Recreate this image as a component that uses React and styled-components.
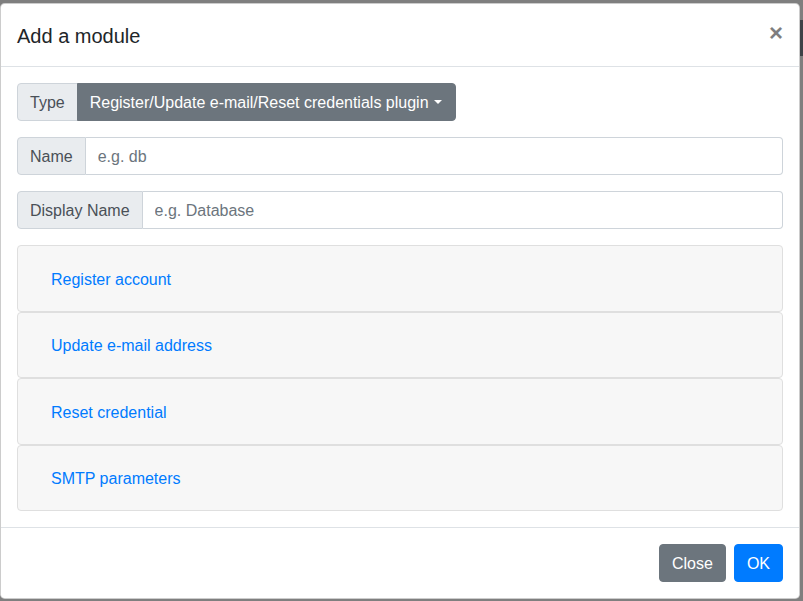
import React from "react";
import styled, { createGlobalStyle } from "styled-components";

const GlobalStyle = createGlobalStyle`
  * { box-sizing: border-box; }
  body {
    margin: 0;
    background: #7f7f7f;
    background-image: linear-gradient(#3d4247, #3d4247);
    background-size: 4px 36px;
    background-position: right 0 top 20px;
    background-repeat: no-repeat;
    font-family: "Liberation Sans", Arial, sans-serif;
    font-size: 16px;
    line-height: 1.5;
    color: #212529;
  }
`;

const Backdrop = styled.div`
  padding-top: 3px;
  min-height: 601px;
`;

const Modal = styled.div`
  width: 800px;
  background: #fff;
  border: 1px solid rgba(0, 0, 0, 0.2);
  border-radius: 4.8px;
  display: flex;
  flex-direction: column;
`;

const Header = styled.div`
  display: flex;
  align-items: flex-start;
  justify-content: space-between;
  padding: 17px 16px 15px;
  border-bottom: 1px solid #dee2e6;
`;

const Title = styled.h5`
  margin: 0;
  font-size: 20px;
  font-weight: 500;
  line-height: 1.5;
`;

const CloseX = styled.button`
  border: 0;
  background: transparent;
  padding: 16px;
  margin: -16px -16px -16px auto;
  font-family: inherit;
  font-size: 24px;
  font-weight: 700;
  line-height: 1;
  color: #000;
  opacity: 0.5;
  cursor: pointer;
`;

const Body = styled.div`
  padding: 16px;
  display: flex;
  flex-direction: column;
  gap: 16px;
`;

const InputGroup = styled.div`
  display: flex;
  height: 38px;
`;

const Prepend = styled.span`
  display: flex;
  align-items: center;
  padding: 7px 12px 5px;
  background: #e9ecef;
  border: 1px solid #ced4da;
  border-radius: 4px 0 0 4px;
  color: #495057;
  white-space: nowrap;
`;

const DropButton = styled.button`
  display: flex;
  align-items: center;
  padding: 7px 12px 5px;
  background: #6c757d;
  border: 1px solid #6c757d;
  border-radius: 0 4px 4px 0;
  color: #fff;
  font-family: inherit;
  font-size: 16px;
  margin-left: -1px;

  &::after {
    content: "";
    display: inline-block;
    margin-left: 5px;
    margin-right: 1px;
    margin-top: -3px;
    border-top: 4.8px solid;
    border-left: 4.8px solid transparent;
    border-right: 4.8px solid transparent;
  }
`;

const Input = styled.input`
  flex: 1;
  min-width: 0;
  padding: 7px 12px 5px;
  border: 1px solid #ced4da;
  border-left: 0;
  border-radius: 0 4px 4px 0;
  font-family: inherit;
  font-size: 16px;
  color: #495057;

  &::placeholder {
    color: #6c757d;
  }
`;

const Accordion = styled.div`
  display: flex;
  flex-direction: column;
`;

const Card = styled.div`
  height: 66.5px;
  display: flex;
  align-items: center;
  padding: 3px 21px 0;
  background: #f7f7f7;
  border: 1px solid #dfdfdf;
  border-radius: 4px;
`;

const LinkButton = styled.button`
  border: 0;
  background: transparent;
  padding: 6px 12px;
  color: #007bff;
  font-family: inherit;
  font-size: 16px;
  line-height: 1.5;
  cursor: pointer;
`;

const Footer = styled.div`
  display: flex;
  justify-content: flex-end;
  align-items: center;
  padding: 12px;
  border-top: 1px solid #dee2e6;
`;

const Btn = styled.button`
  margin: 4px;
  padding: 7px 12px 5px;
  border: 1px solid ${(p) => p.$bg};
  background: ${(p) => p.$bg};
  color: #fff;
  border-radius: 4px;
  font-family: inherit;
  font-size: 16px;
  line-height: 1.5;
`;

const sections = [
  "Register account",
  "Update e-mail address",
  "Reset credential",
  "SMTP parameters",
];

export default function App() {
  return (
    <>
      <GlobalStyle />
      <Backdrop>
        <Modal>
          <Header>
            <Title>Add a module</Title>
            <CloseX aria-label="Close">×</CloseX>
          </Header>
          <Body>
            <InputGroup>
              <Prepend>Type</Prepend>
              <DropButton>Register/Update e-mail/Reset credentials plugin</DropButton>
            </InputGroup>
            <InputGroup>
              <Prepend>Name</Prepend>
              <Input placeholder="e.g. db" />
            </InputGroup>
            <InputGroup>
              <Prepend>Display Name</Prepend>
              <Input placeholder="e.g. Database" />
            </InputGroup>
            <Accordion>
              {sections.map((s) => (
                <Card key={s}>
                  <LinkButton>{s}</LinkButton>
                </Card>
              ))}
            </Accordion>
          </Body>
          <Footer>
            <Btn $bg="#6c757d">Close</Btn>
            <Btn $bg="#007bff">OK</Btn>
          </Footer>
        </Modal>
      </Backdrop>
    </>
  );
}
